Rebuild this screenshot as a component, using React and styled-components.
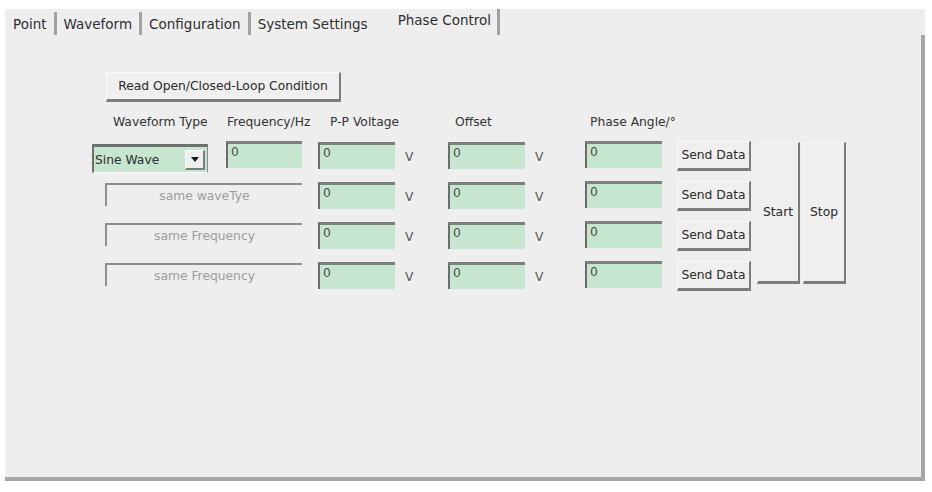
import React from "react";
import styled, { createGlobalStyle } from "styled-components";

const GlobalStyle = createGlobalStyle`
  html, body {
    margin: 0;
    background: #ffffff;
    font-family: "DejaVu Sans", "Liberation Sans", sans-serif;
  }
`;

const tabs = [
  { label: "Point", sep: true },
  { label: "Waveform", sep: true },
  { label: "Configuration", sep: true },
  { label: "System Settings", sep: false },
  { label: "Phase Control", sep: true, active: true },
];

const rows = [
  { first: "select", pp: "0", offset: "0", phase: "0" },
  { first: "same waveTye", pp: "0", offset: "0", phase: "0" },
  { first: "same Frequency", pp: "0", offset: "0", phase: "0" },
  { first: "same Frequency", pp: "0", offset: "0", phase: "0" },
];

export default function App() {
  return (
    <>
      <GlobalStyle />
      <Window>
        <TabBar>
          {tabs.map((t) => (
            <Tab key={t.label} $sep={t.sep} $active={t.active}>
              {t.label}
            </Tab>
          ))}
        </TabBar>
        <Panel>
          <WideButton>Read Open/Closed-Loop Condition</WideButton>
          <Controls>
            <HeadLabel $shift={21}>Waveform Type</HeadLabel>
            <HeadLabel $shift={1}>Frequency/Hz</HeadLabel>
            <HeadLabel $shift={12}>P-P Voltage</HeadLabel>
            <HeadLabel $shift={7}>Offset</HeadLabel>
            <HeadLabel $shift={5}>Phase Angle/°</HeadLabel>
            <span />
            <span />
            <span />

            {rows.map((r, i) => (
              <React.Fragment key={i}>
                {r.first === "select" ? (
                  <>
                    <Select>
                      <SelectText>Sine Wave</SelectText>
                      <ArrowBox>
                        <svg width="8" height="5" viewBox="0 0 8 5">
                          <path d="M0 0 L8 0 L4 5 Z" fill="#1a1a1a" />
                        </svg>
                      </ArrowBox>
                    </Select>
                    <Field $w={76}>0</Field>
                  </>
                ) : (
                  <Disabled>{r.first}</Disabled>
                )}
                <Cell>
                  <Field $w={77}>{r.pp}</Field>
                  <Unit>V</Unit>
                </Cell>
                <Cell>
                  <Field $w={77}>{r.offset}</Field>
                  <Unit>V</Unit>
                </Cell>
                <Field $w={77}>{r.phase}</Field>
                <SendButton>Send Data</SendButton>
              </React.Fragment>
            ))}
            <TallButton $col={7}>Start</TallButton>
            <TallButton $col={8}>Stop</TallButton>
          </Controls>
        </Panel>
      </Window>
    </>
  );
}

const Window = styled.div`
  margin: 9px 0 0 5px;
  width: 920px;
  height: 472px;
  background: #eeeeee;
  display: flex;
  flex-direction: column;
`;

const TabBar = styled.div`
  height: 26px;
  display: flex;
  align-items: stretch;
  padding-left: 1px;
  padding-top: 3px;
  box-sizing: border-box;
`;

const Tab = styled.div`
  display: flex;
  align-items: center;
  padding: ${(p) => (p.$active ? "0 6px 4px 20px" : "0 7px 0 7px")};
  margin-top: ${(p) => (p.$active ? "-3px" : "0")};
  font-size: 13.5px;
  color: #2e2e2e;
  border-right: ${(p) => (p.$sep ? "3px solid #a2a2a2" : "3px solid transparent")};
  white-space: nowrap;
`;

const Panel = styled.div`
  flex: 1;
  border-right: 4px solid #a6a6a6;
  border-bottom: 4px solid #a6a6a6;
  padding: 37px 0 0 87px;
  font-size: 12.3px;
  color: #2e2e2e;
`;

const Raised = styled.div`
  box-sizing: border-box;
  display: flex;
  align-items: center;
  justify-content: center;
  background: #efefef;
  border-top: 1px solid #fbfbfb;
  border-left: 1px solid #fbfbfb;
  border-right: 2px solid #7c7c7c;
  border-bottom: 3px solid #7c7c7c;
  color: #2a2a2a;
  white-space: nowrap;
`;

const WideButton = styled(Raised)`
  width: 235px;
  height: 30px;
  margin: 0 0 7px 14px;
`;

const Controls = styled.div`
  display: grid;
  grid-template-columns: 134px 92px 130px 137px 92px 80px 46px 43px;
  grid-template-rows: 20px repeat(4, 28px);
  row-gap: 12px;
`;

const HeadLabel = styled.div`
  align-self: end;
  line-height: 14px;
  padding-left: ${(p) => p.$shift}px;
  white-space: nowrap;
  color: #333333;
`;

const Cell = styled.div`
  display: flex;
  align-items: center;
`;

const Field = styled.div`
  box-sizing: border-box;
  width: ${(p) => p.$w}px;
  height: 27px;
  background: #c6e6cf;
  border-top: 3px solid #7f7f7f;
  border-left: 2px solid #6c6c6c;
  padding: 1px 0 0 3px;
  color: #4a4a4a;
`;

const Unit = styled.span`
  margin: 4px 0 0 10px;
  color: #555555;
`;

const Select = styled.div`
  box-sizing: border-box;
  width: 116px;
  height: 29px;
  margin-top: 3px;
  display: flex;
  align-items: center;
  justify-content: space-between;
  background: #c6e6cf;
  border-top: 3px solid #6e6e6e;
  border-left: 2px solid #6e6e6e;
  border-right: 1px solid #8a8a8a;
  border-bottom: 1px solid #fafafa;
  padding: 0 2px 0 1px;
`;

const SelectText = styled.span`
  color: #2e2e2e;
`;

const ArrowBox = styled(Raised)`
  width: 20px;
  height: 20px;
  border-bottom-width: 2px;
`;

const Disabled = styled.div`
  grid-column: span 2;
  box-sizing: border-box;
  width: 197px;
  height: 23px;
  margin: 2px 0 0 13px;
  display: flex;
  align-items: center;
  justify-content: center;
  border-top: 2px solid #8c8c8c;
  border-left: 2px solid #8c8c8c;
  color: #9c9c9c;
`;

const SendButton = styled(Raised)`
  width: 74px;
  height: 30px;
`;

const TallButton = styled(Raised)`
  grid-column: ${(p) => p.$col};
  grid-row: 2 / span 4;
  width: 43px;
  height: 142px;
  margin-top: 1px;
  border-top-color: #f4f4f4;
  border-left-color: #f4f4f4;
`;
